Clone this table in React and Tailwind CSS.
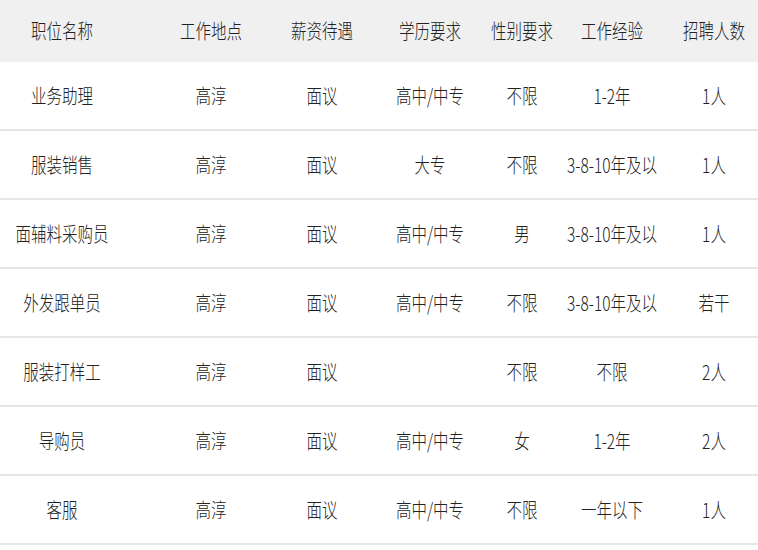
import React from "react";

const columns = [
  { title: "职位名称", cls: "w-[130px] pr-[6px]" },
  { title: "工作地点", cls: "w-[138px] pl-[24px]" },
  { title: "薪资待遇", cls: "w-[108px]" },
  { title: "学历要求", cls: "w-[102px] pl-[6px]" },
  { title: "性别要求", cls: "w-[88px]" },
  { title: "工作经验", cls: "w-[94px] pr-[2px]" },
  { title: "招聘人数", cls: "w-[98px] pl-[10px]" },
];

const jobs = [
  ["业务助理", "高淳", "面议", "高中/中专", "不限", "1-2年", "1人"],
  ["服装销售", "高淳", "面议", "大专", "不限", "3-8-10年及以", "1人"],
  ["面辅料采购员", "高淳", "面议", "高中/中专", "男", "3-8-10年及以", "1人"],
  ["外发跟单员", "高淳", "面议", "高中/中专", "不限", "3-8-10年及以", "若干"],
  ["服装打样工", "高淳", "面议", "", "不限", "不限", "2人"],
  ["导购员", "高淳", "面议", "高中/中专", "女", "1-2年", "2人"],
  ["客服", "高淳", "面议", "高中/中专", "不限", "一年以下", "1人"],
];

const Cell = ({ cls, children }) => (
  <div className={`${cls} flex items-center justify-center whitespace-nowrap`}>
    <span className="inline-block scale-y-[1.3]">{children}</span>
  </div>
);

const App = () => {
  return (
    <div
      className="bg-white w-[758px] h-[550px] overflow-hidden text-[15.5px] font-light text-[#222]"
      style={{ fontFamily: '"Noto Sans CJK SC", "Noto Sans", sans-serif' }}
    >
      {/* Header */}
      <div className="flex h-[62px] bg-[#f0f0f0]">
        {columns.map((col) => (
          <Cell key={col.title} cls={col.cls}>
            {col.title}
          </Cell>
        ))}
      </div>

      {/* Rows */}
      {jobs.map((row) => (
        <div
          key={row[0]}
          className="flex h-[69px] pt-[1px] border-b-2 border-[#e6e6e6]"
        >
          {row.map((value, i) => (
            <Cell key={i} cls={columns[i].cls}>
              {value}
            </Cell>
          ))}
        </div>
      ))}
    </div>
  );
};

export default App;
